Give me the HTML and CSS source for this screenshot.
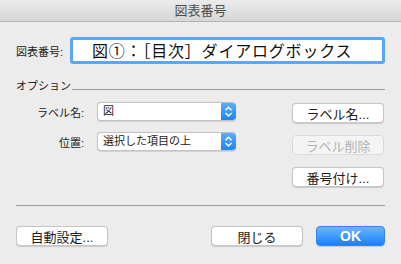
FILE: index.html
```html
<!DOCTYPE html>
<html lang="ja">
<head>
  <meta charset="UTF-8" />
  <title>図表番号</title>
  <link rel="stylesheet" href="styles.css">
</head>
<body>
  <div class="dialog">
    <div class="titlebar">図表番号</div>

    <div class="content">
      <div class="caption-row">
        <label class="caption-label">図表番号:</label>
        <div class="caption-field">図①：［目次］ダイアログボックス</div>
      </div>

      <div class="group-header">
        <span>オプション</span>
        <div class="group-line"></div>
      </div>

      <div class="options">
        <div class="option-fields">
          <div class="field-row">
            <span class="field-label">ラベル名:</span>
            <div class="popup">
              <span class="popup-value">図</span>
              <span class="stepper">
                <svg width="15" height="19" viewBox="0 0 15 19"><path d="M4.5 8.2 L7.5 5.2 L10.5 8.2 M4.5 11 L7.5 14 L10.5 11" fill="none" stroke="#fff" stroke-width="1.5"/></svg>
              </span>
            </div>
          </div>
          <div class="field-row">
            <span class="field-label">位置:</span>
            <div class="popup">
              <span class="popup-value">選択した項目の上</span>
              <span class="stepper">
                <svg width="15" height="19" viewBox="0 0 15 19"><path d="M4.5 8.2 L7.5 5.2 L10.5 8.2 M4.5 11 L7.5 14 L10.5 11" fill="none" stroke="#fff" stroke-width="1.5"/></svg>
              </span>
            </div>
          </div>
        </div>

        <div class="option-buttons">
          <button class="btn side-btn">ラベル名...</button>
          <button class="btn side-btn" disabled>ラベル削除</button>
          <button class="btn side-btn">番号付け...</button>
        </div>
      </div>

      <div class="separator"></div>

      <div class="footer">
        <button class="btn footer-btn">自動設定...</button>
        <div class="footer-right">
          <button class="btn footer-btn">閉じる</button>
          <button class="btn ok-btn">OK</button>
        </div>
      </div>
    </div>
  </div>
</body>
</html>
```

FILE: styles.css
```css
* {
  box-sizing: border-box;
}

body {
  margin: 0;
  background: #ececec;
  font-family: 'Liberation Sans', 'Noto Sans CJK JP', sans-serif;
  color: #222;
}

.dialog {
  width: 401px;
  height: 264px;
  background: #ececec;
}

.titlebar {
  height: 22px;
  line-height: 21px;
  text-align: center;
  font-size: 13px;
  color: #4d4d4d;
  background: linear-gradient(#ebebeb, #d6d6d6);
  border-bottom: 1px solid #b4b4b4;
}

.content {
  padding: 0 16px;
}

.caption-row {
  display: flex;
  align-items: center;
  margin-top: 15px;
}

.caption-label {
  width: 54px;
  font-size: 11px;
}

.caption-field {
  flex: 1;
  height: 27px;
  background: #fff;
  border: 3px solid #59a7f8;
  border-radius: 3px;
  font-family: 'Noto Sans CJK JP', sans-serif;
  font-size: 16px;
  line-height: 20px;
  letter-spacing: 0.8px;
  padding-left: 19px;
  color: #111;
}

.group-header {
  display: flex;
  align-items: flex-start;
  margin-top: 15px;
  height: 14px;
  font-size: 11px;
  line-height: 14px;
}

.group-line {
  flex: 1;
  height: 1px;
  margin-top: 10px;
  margin-left: 1px;
  background: #9c9c9c;
}

.options {
  display: flex;
  justify-content: space-between;
  padding-top: 9px;
}

.option-fields {
  display: flex;
  flex-direction: column;
  gap: 11px;
}

.field-row {
  display: flex;
  align-items: center;
}

.field-label {
  width: 68px;
  text-align: right;
  font-size: 11px;
  margin-right: 13px;
}

.popup {
  display: flex;
  width: 139px;
  height: 19px;
  background: #fff;
  border: 1px solid #c4c4c4;
  border-right: none;
  border-radius: 4px;
  overflow: hidden;
  box-shadow: 0 0.5px 1px rgba(0, 0, 0, 0.12);
}

.popup-value {
  flex: 1;
  font-size: 11px;
  line-height: 17px;
  padding-left: 5px;
}

.stepper {
  width: 15px;
  height: 19px;
  margin-top: -1px;
  background: linear-gradient(#5fb0fb, #1c81fa);
}

.option-buttons {
  display: flex;
  flex-direction: column;
  gap: 12px;
  margin-top: 1px;
  margin-right: 1px;
}

.btn {
  height: 20px;
  padding: 0;
  font-family: 'Liberation Sans', 'Noto Sans CJK JP', sans-serif;
  font-size: 13px;
  color: #1c1c1c;
  background: #fff;
  border: 1px solid #c6c6c6;
  border-radius: 4px;
  box-shadow: 0 0.5px 1px rgba(0, 0, 0, 0.15);
}

.btn:disabled {
  color: #b3b3b3;
  background: #f4f4f4;
  border-color: #dadada;
  box-shadow: none;
}

.side-btn {
  width: 92px;
}

.separator {
  height: 1px;
  background: #9c9c9c;
  margin-top: 18px;
}

.footer {
  display: flex;
  justify-content: space-between;
  margin-top: 20px;
}

.footer-right {
  display: flex;
  gap: 13px;
}

.footer-btn {
  width: 92px;
}

.ok-btn {
  width: 69px;
  color: #fff;
  font-size: 14px;
  font-weight: bold;
  background: linear-gradient(#6ab5fb, #1981fb);
  border-color: #3a84e6;
}
```
